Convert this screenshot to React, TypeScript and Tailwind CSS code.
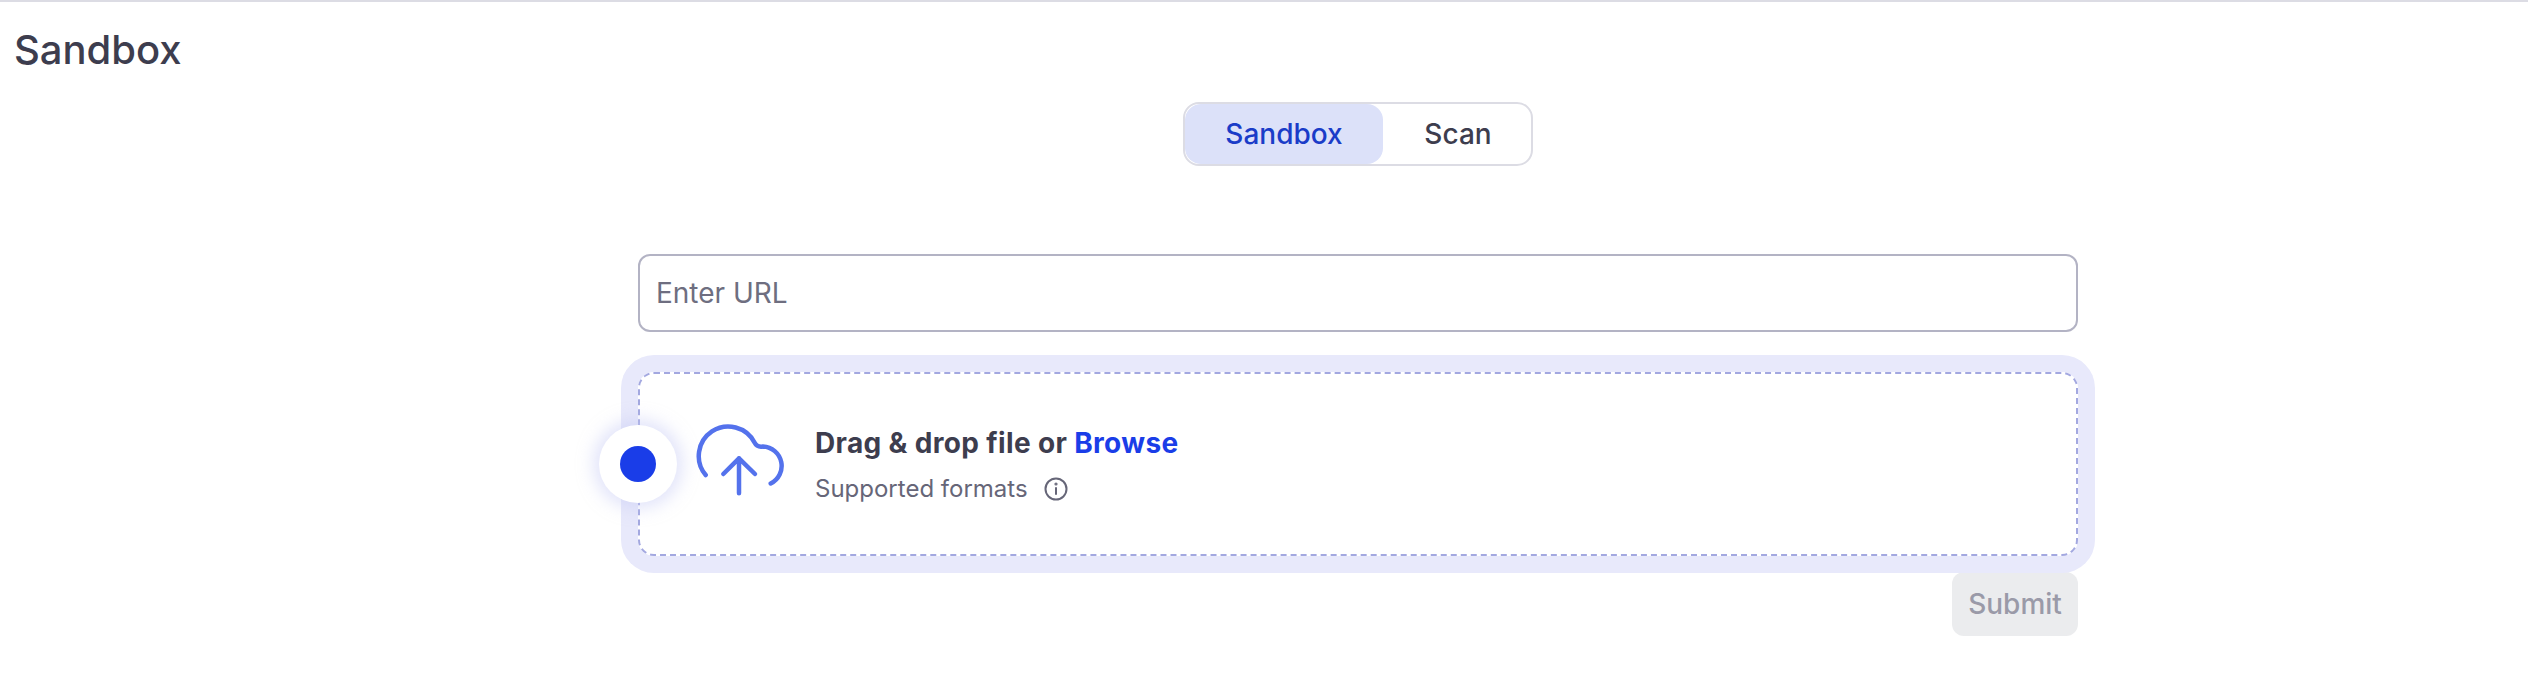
const font = { fontFamily: "Inter, 'Liberation Sans', sans-serif" };

function CloudUpload() {
  return (
    <svg className="-mt-[8px]" width="100" height="80" viewBox="0 0 100 80" fill="none" stroke="#5472ec" strokeWidth="4.5" strokeLinecap="round" strokeLinejoin="round">
      <path d="M16.7 55A29.5 29.5 0 1 1 65.5 22.5Q68 27.5 74 26.5A19.5 19.5 0 0 1 81.7 63.5" />
      <path d="M50 73.3V38.3M34.3 54L50 38.3L66 54" />
    </svg>
  );
}

function InfoIcon() {
  return (
    <svg width="24" height="24" viewBox="0 0 24 24" fill="none" stroke="#666678" strokeWidth="2" strokeLinecap="round">
      <circle cx="12" cy="12" r="10.5" />
      <path d="M12 11V17" />
      <circle cx="12" cy="7" r="0.6" fill="#666678" />
    </svg>
  );
}

export default function App() {
  return (
    <div style={font} className="h-[688px] w-[2528px] overflow-hidden bg-white">
      <div className="h-[2px] bg-[#dcdce4]" />
      <h1 className="ml-[14px] mt-[24px] text-[40px] leading-[48px] font-medium text-[#3d3d4e]">Sandbox</h1>

      <div className="mt-[28px] flex flex-col items-center pl-[188px]">
        <div className="flex h-[64px] w-[350px] overflow-hidden rounded-[16px] border-2 border-[#dcdce4]">
          <div className="flex w-[198px] items-center justify-center rounded-[16px] bg-[#dce1f9] text-[28px] font-medium text-[#1a3cc8]">Sandbox</div>
          <div className="flex flex-1 items-center justify-center pl-[2px] text-[28px] font-medium text-[#3d3d4e]">Scan</div>
        </div>

        <div className="mt-[88px] flex w-[1440px] flex-col">
          <div className="flex h-[78px] items-center rounded-[12px] border-2 border-[#b3b3c4] px-[16px] text-[28px] text-[#6e6e80]">Enter URL</div>

          <div className="relative mt-[40px] flex h-[184px] items-center rounded-[16px] border-2 border-dashed border-[#a3a8e0] pl-[49px] shadow-[0_0_0_17px_#e8e9fb]">
            <div className="absolute left-[-2px] top-1/2 flex h-[78px] w-[78px] -translate-x-1/2 -translate-y-1/2 items-center justify-center rounded-full bg-white shadow-[0_0_16px_6px_rgba(200,204,245,0.5)]">
              <div className="h-[36px] w-[36px] rounded-full bg-[#1a3de8]" />
            </div>
            <CloudUpload />
            <div className="ml-[26px] flex flex-col">
              <div className="text-[28px] leading-[40px] font-bold tracking-[0.35px] text-[#3d3d4e]">
                Drag &amp; drop file or <span className="text-[#1a3de8]">Browse</span>
              </div>
              <div className="mt-[10px] flex items-center gap-[16px] text-[24px] leading-[32px] text-[#666678]">
                Supported formats
                <InfoIcon />
              </div>
            </div>
          </div>

          <div className="mt-[16px] flex justify-end">
            <div className="flex h-[64px] w-[126px] items-center justify-center rounded-[12px] bg-[#ebecee] text-[28px] font-medium text-[#9a9aa8]">Submit</div>
          </div>
        </div>
      </div>
    </div>
  );
}
